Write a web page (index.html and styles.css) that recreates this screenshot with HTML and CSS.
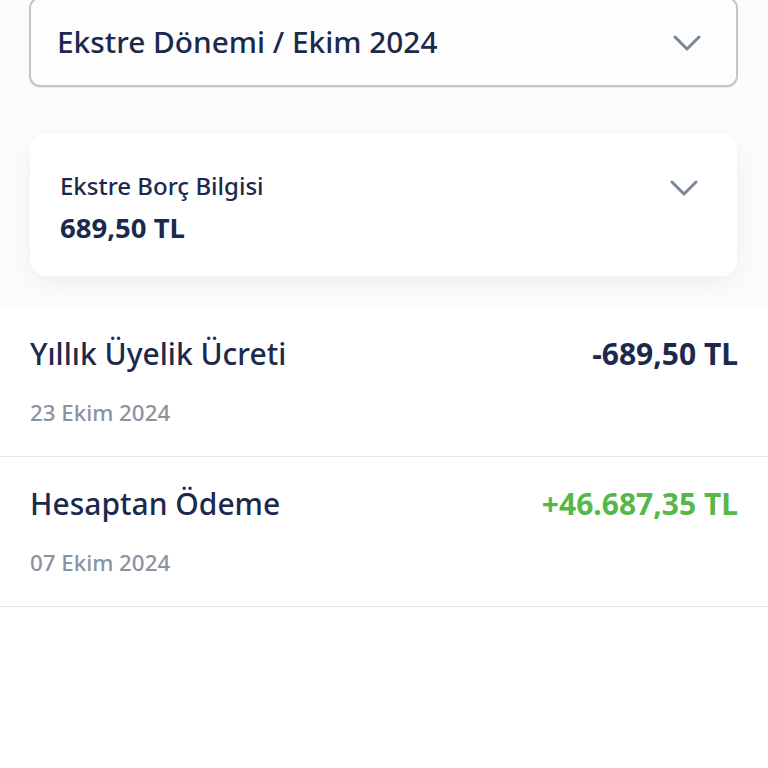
FILE: index.html
```html
<!DOCTYPE html>
<html lang="tr">
<head>
    <meta charset="UTF-8">
    <meta name="viewport" content="width=device-width, initial-scale=1.0">
    <title>Ekstre</title>
    <link rel="stylesheet" href="styles.css">
</head>
<body>
    <div class="top">
        <div class="period-select">
            <span class="period-text">Ekstre Dönemi / Ekim 2024</span>
            <svg class="chevron" width="28" height="17" viewBox="0 0 28 17">
                <path d="M2 2 L14 14 L26 2" fill="none" stroke="#7b8797" stroke-width="3" stroke-linecap="round" stroke-linejoin="round"/>
            </svg>
        </div>

        <div class="debt-card">
            <div class="debt-info">
                <div class="debt-label">Ekstre Borç Bilgisi</div>
                <div class="debt-amount">689,50 TL</div>
            </div>
            <svg class="chevron small" width="28" height="17" viewBox="0 0 28 17">
                <path d="M2 2 L14 14 L26 2" fill="none" stroke="#7b8797" stroke-width="3" stroke-linecap="round" stroke-linejoin="round"/>
            </svg>
        </div>
    </div>

    <ul class="transactions">
        <li class="tx">
            <div class="tx-line">
                <span class="tx-title">Yıllık Üyelik Ücreti</span>
                <span class="tx-amount">-689,50 TL</span>
            </div>
            <div class="tx-date">23 Ekim 2024</div>
        </li>
        <li class="tx">
            <div class="tx-line">
                <span class="tx-title">Hesaptan Ödeme</span>
                <span class="tx-amount positive">+46.687,35 TL</span>
            </div>
            <div class="tx-date">07 Ekim 2024</div>
        </li>
    </ul>
</body>
</html>
```

FILE: styles.css
```css
* {
    box-sizing: border-box;
    margin: 0;
    padding: 0;
    font-family: "Noto Sans", "Open Sans", sans-serif;
}

body {
    background-color: #ffffff;
    color: #1b2a4c;
}

.top {
    background-color: #fcfcfc;
    padding: 0 30px 31px 29px;
}

.period-select {
    display: flex;
    align-items: center;
    justify-content: space-between;
    height: 90px;
    margin-top: -3px;
    padding: 0 35px 2px 26px;
    background-color: #fdfdfe;
    border: 2px solid #c3c5cb;
    border-radius: 11px;
    box-shadow: 0 1px 1px rgba(0, 0, 0, 0.08);
}

.period-text {
    font-size: 29.8px;
    font-weight: 500;
}

.chevron {
    margin-top: 4px;
}

.debt-card {
    display: flex;
    justify-content: space-between;
    align-items: flex-start;
    margin: 46px 1px 0 1px;
    padding: 36px 39px 0 30px;
    height: 143px;
    background-color: #ffffff;
    border-radius: 16px;
    box-shadow: 0 8px 28px rgba(0, 0, 0, 0.06);
}

.debt-label {
    font-size: 24px;
    font-weight: 500;
    line-height: 1.4;
    margin-bottom: 7px;
}

.debt-amount {
    font-size: 27.5px;
    font-weight: 700;
    line-height: 1.3;
}

.chevron.small {
    margin-top: 11px;
}

.transactions {
    list-style: none;
}

.tx {
    height: 150px;
    padding: 26px 30px 0 30px;
    border-bottom: 1px solid #e6e8ed;
}

.tx-line {
    display: flex;
    justify-content: space-between;
    align-items: baseline;
}

.tx-title {
    font-size: 30px;
    font-weight: 500;
}

.tx-amount {
    font-size: 30px;
    font-weight: 700;
}

.tx-amount.positive {
    color: #56b848;
}

.tx-date {
    margin-top: 23px;
    font-size: 22.3px;
    font-weight: 500;
    color: #8a93a0;
}
```
